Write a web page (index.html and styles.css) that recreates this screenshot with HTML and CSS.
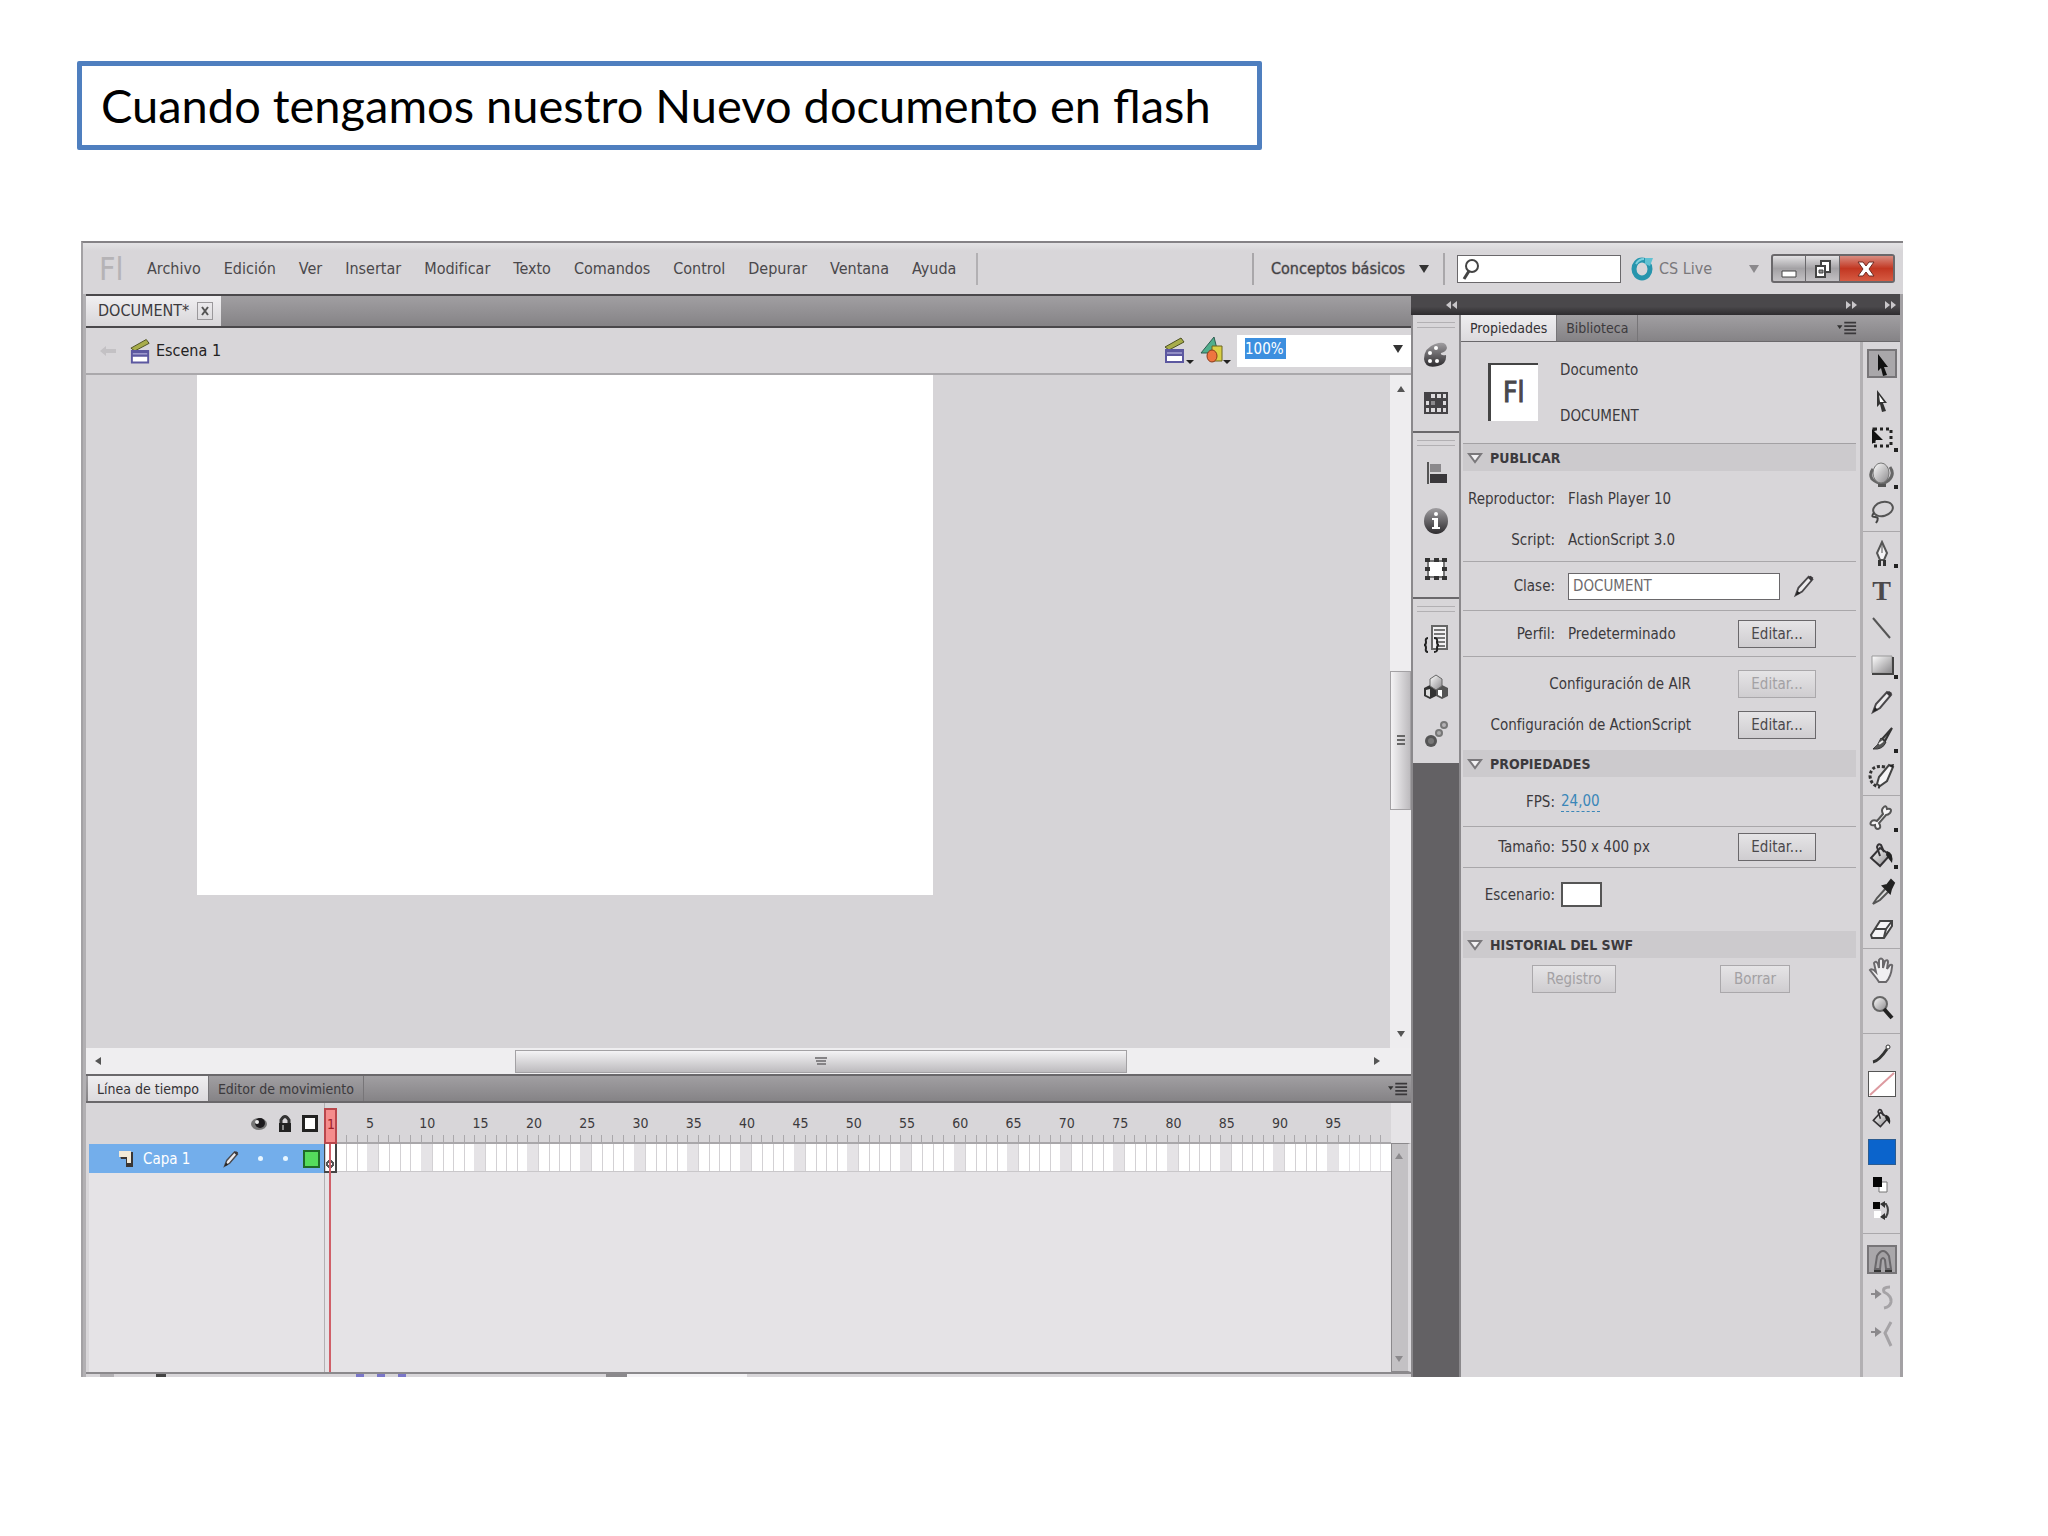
FILE: index.html
```html
<!DOCTYPE html>
<html lang="es">
<head>
<meta charset="utf-8">
<title>Nuevo documento en flash</title>
<link rel="stylesheet" href="styles.css">
</head>
<body>
<svg class="defs" aria-hidden="true">
  <defs>
    <linearGradient id="ball" x1="0" y1="0" x2="1" y2="1"><stop offset="0" stop-color="#fff"/><stop offset="1" stop-color="#8a888b"/></linearGradient>
    <linearGradient id="dark" x1="0" y1="0" x2="0" y2="1"><stop offset="0" stop-color="#a09ea1"/><stop offset="1" stop-color="#2e2c2f"/></linearGradient>
    <symbol id="clap" viewBox="0 0 24 28"><path d="M2 11 18 2l3 4L6 14z" fill="#a8ad4a" stroke="#4c5020"/><path d="M3 14h17v12H3z" fill="#fff" stroke="#5c58a0" stroke-width="2"/><path d="M3 14h17v6H3z" fill="#5c58a0"/><path d="M4 17h15" stroke="#c9c6ea"/></symbol>
    <symbol id="pencil" viewBox="0 0 28 28"><path d="M5 24l3-8L19 4l4 3-11 13z" fill="#ecebed" stroke="#4a484b" stroke-width="2"/><path d="M18 5l4 4 2-4-3-2z" fill="#3c3a3d"/><path d="M5 24l2-5 3 3z" fill="#222"/></symbol>
    <symbol id="bucket" viewBox="0 0 28 28"><path d="M3 17 12 7l10 7-10 11z" fill="url(#ball)" stroke="#343235" stroke-width="2"/><path d="M12 15 9 6q1-4 4-2l3 7" fill="none" stroke="#343235" stroke-width="2"/><path d="M19 10q7 2 5 12-4-5-6-8z" fill="#222"/></symbol>
    <symbol id="menu" viewBox="0 0 22 14"><path d="M0 4h6L3 8z" fill="#333"/><path d="M8 1h13M8 5h13M8 9h13M8 13h13" stroke="#3a383b" stroke-width="2"/></symbol>
    <symbol id="tri" viewBox="0 0 16 12"><path d="M2 2h12L8 10z" fill="#f2f1f3" stroke="#7a787b" stroke-width="2"/></symbol>
  </defs>
</svg>

<h1 class="title">Cuando tengamos nuestro Nuevo documento en flash</h1>

<main class="app">
  <header class="menubar">
    <span class="logo">Fl</span>
    <nav class="menus">
      <a href="#">Archivo</a><a href="#">Edición</a><a href="#">Ver</a><a href="#">Insertar</a><a href="#">Modificar</a><a href="#">Texto</a><a href="#">Comandos</a><a href="#">Control</a><a href="#">Depurar</a><a href="#">Ventana</a><a href="#">Ayuda</a>
    </nav>
    <button class="workspace">Conceptos básicos <i class="down"></i></button>
    <label class="search"><svg width="20" height="24" viewBox="0 0 20 24"><circle cx="11" cy="9" r="6" fill="none" stroke="#444" stroke-width="2"/><path d="M8 14 3 22" stroke="#444" stroke-width="3"/></svg><input type="search" aria-label="Buscar"></label>
    <button class="live"><svg width="24" height="26" viewBox="0 0 24 26"><ellipse cx="11" cy="13" rx="8" ry="9" fill="none" stroke="#2795ad" stroke-width="5"/><path d="M14 2l8 0-3 8-5-2z" fill="#62c1d2"/><path d="M5 8q3-5 8-5" stroke="#7dd0de" stroke-width="2" fill="none"/></svg>CS Live <i class="down pale"></i></button>
    <div class="winbtns">
      <button aria-label="Minimizar"><svg width="20" height="24" viewBox="0 0 20 24"><path d="M3 14h14v6H3z" fill="#fff" stroke="#444"/></svg></button>
      <button aria-label="Restaurar"><svg width="20" height="24" viewBox="0 0 20 24"><path d="M8 4h9v11H8z" fill="#fff" stroke="#444" stroke-width="2"/><path d="M3 9h9v11H3z" fill="#fff" stroke="#444" stroke-width="2"/><path d="M6 13h4v3H6z" fill="#888" stroke="#444"/></svg></button>
      <button class="close" aria-label="Cerrar"><svg width="20" height="22" viewBox="0 0 20 22"><path d="M2 4h5l3 4 3-4h5l-5 7 5 7h-5l-3-4-3 4H2l5-7z" fill="#fff" stroke="#6d2a22"/></svg></button>
    </div>
  </header>

  <div class="body">
    <section class="left">
      <div class="doctabs"><button class="doctab">DOCUMENT* <span class="x"><svg width="8" height="10" viewBox="0 0 8 10"><path d="M1 1l6 8M7 1 1 9" stroke="#555" stroke-width="2"/></svg></span></button></div>
      <div class="editbar">
        <svg class="back" width="18" height="12" viewBox="0 0 18 12"><path d="M1 6l6-5v3h10v4H7v3z" fill="#c3c1c4"/></svg>
        <svg width="23" height="28"><use href="#clap"/></svg>
        <span class="scene">Escena 1</span>
        <button class="ib" aria-label="Editar escena"><svg width="34" height="30" viewBox="0 0 34 30"><use href="#clap" width="24" height="28"/><path d="M23 24h8l-4 4z" fill="#222"/></svg></button>
        <button class="ib" aria-label="Editar símbolos"><svg width="34" height="30" viewBox="0 0 34 30"><path d="M1 17 14 1l4 16z" fill="#4fae8c" stroke="#2c5c50"/><path d="M12 10h10v15H12z" fill="#d9cf45" stroke="#6a6520"/><ellipse cx="12" cy="20" rx="5" ry="6" fill="#ee7440" stroke="#8c3a1a"/><path d="M23 24h8l-4 4z" fill="#222"/></svg></button>
        <div class="zoom"><input type="text" value="100%" aria-label="Zoom"><button aria-label="Niveles de zoom"><i class="down"></i></button></div>
      </div>
      <div class="stage">
        <div class="paste"><div class="canvas"></div></div>
        <div class="vscroll"><i class="up small"></i><span class="thumb"><svg width="8" height="13" viewBox="0 0 8 13"><path d="M0 2h8M0 6h8M0 10h8" stroke="#666" stroke-width="2"/></svg></span><i class="down small"></i></div>
      </div>
      <div class="hscroll"><i class="lt"></i><span class="thumb"><svg width="12" height="9" viewBox="0 0 12 9"><path d="M0 1h12M1 4h10M2 7h9" stroke="#858386" stroke-width="2"/></svg></span><i class="rt"></i></div>

      <div class="tabs timeline-tabs"><button class="tab on">Línea de tiempo</button><button class="tab">Editor de movimiento</button><svg class="pm" width="20" height="14"><use href="#menu"/></svg></div>
      <div class="timeline">
        <div class="layers">
          <div class="lhead">
            <svg width="18" height="16" viewBox="0 0 18 16"><ellipse cx="9" cy="8" rx="8" ry="6" fill="#777"/><circle cx="10" cy="7" r="5" fill="#1c1a1d"/><circle cx="7" cy="6" r="2" fill="#eee"/></svg>
            <svg width="16" height="18" viewBox="0 0 16 18"><path d="M4 9V5q4-7 8 0v4" fill="none" stroke="#333" stroke-width="3"/><path d="M2 8h12v9H2z" fill="#222"/><path d="M6 10v5" stroke="#888" stroke-width="2"/></svg>
            <i class="outline"></i>
          </div>
          <div class="layer">
            <svg width="16" height="18" viewBox="0 0 16 18"><path d="M0 2h14v15H7V9H2z" fill="#3a3634"/><path d="M0 1h12v12H8V7H0z" fill="#f3ead8"/></svg>
            <span class="lname">Capa 1</span>
            <svg width="20" height="22"><use href="#pencil"/></svg><i class="dot"></i><i class="dot"></i><i class="green"></i>
          </div>
        </div>
        <div class="frames">
          <div class="ruler">
            <span>5</span><span>10</span><span>15</span><span>20</span><span>25</span><span>30</span><span>35</span><span>40</span><span>45</span><span>50</span><span>55</span><span>60</span><span>65</span><span>70</span><span>75</span><span>80</span><span>85</span><span>90</span><span>95</span><span></span>
          </div>
          <div class="cells"><span></span><span></span><span></span><span></span><span></span><span></span><span></span><span></span><span></span><span></span><span></span><span></span><span></span><span></span><span></span><span></span><span></span><span></span><span></span><span></span></div>
          <div class="playhead"><b>1</b><em></em></div>
        </div>
        <div class="tscroll"><i class="up small"></i><i class="down small"></i></div>
      </div>
      <div class="footer"><i class="f1"></i><i class="f2"></i><i class="f3"></i><i class="f4"></i><i class="f5"></i></div>
    </section>

    <section class="right">
      <div class="strip"><svg width="12" height="8" viewBox="0 0 12 8"><path d="M5 0v8L0 4zM11 0v8L6 4z" fill="#c9c7ca"/></svg><svg class="s2" width="12" height="8" viewBox="0 0 12 8"><path d="M0 0v8l5-4zM6 0v8l5-4z" fill="#c9c7ca"/></svg><svg width="12" height="8" viewBox="0 0 12 8"><path d="M0 0v8l5-4zM6 0v8l5-4z" fill="#c9c7ca"/></svg></div>
      <div class="cols">
        <aside class="dock">
          <div class="dgroup">
            <button aria-label="Color"><svg width="28" height="28" viewBox="0 0 28 28"><path d="M13 3Q24-1 25 7q-1 4-6 5-1 3 5 2 1 9-8 11Q3 28 2 18 2 7 13 3z" fill="url(#dark)"/><circle cx="8" cy="12" r="2" fill="#fff"/><circle cx="14" cy="7" r="2" fill="#fff"/><circle cx="8" cy="20" r="2" fill="#fff"/><circle cx="15" cy="20" r="2" fill="#fff"/></svg></button>
            <button aria-label="Muestras"><svg width="28" height="28" viewBox="0 0 28 28"><path d="M2 3h24v22H2z" fill="#454346"/><path d="M9 5h4v4H9zM15 5h4v4h-4zM21 5h3v4h-3zM4 12h3v4H4zM21 12h3v4h-3zM4 19h3v4H4zM9 19h4v4H9zM15 19h4v4h-4zM21 19h3v4h-3z" fill="#dddbde"/><path d="M9 12h4v4H9z" fill="#8b898c"/></svg></button>
          </div>
          <div class="dgroup">
            <button aria-label="Alinear"><svg width="28" height="28" viewBox="0 0 28 28"><path d="M6 3v22" stroke="#555" stroke-width="2"/><path d="M8 5h11v8H8z" fill="#8b898c"/><path d="M8 15h17v9H8z" fill="#3a383b"/></svg></button>
            <button aria-label="Información"><svg width="28" height="28" viewBox="0 0 28 28"><ellipse cx="14" cy="14" rx="12" ry="13" fill="url(#dark)"/><circle cx="14" cy="7" r="2" fill="#fff"/><path d="M10 11h6v9h2v2h-8v-2h2v-7h-2z" fill="#fff"/></svg></button>
            <button aria-label="Transformar"><svg width="28" height="28" viewBox="0 0 28 28"><path d="M6 6h16v16H6z" fill="#fff" stroke="#777" stroke-width="2"/><path d="M3 3h5v4H3zM12 3h5v4h-5zM20 3h5v4h-5zM3 12h5v4H3zM20 12h5v4h-5zM3 21h5v4H3zM12 21h5v4h-5zM20 21h5v4h-5z" fill="#333"/></svg></button>
          </div>
          <div class="dgroup">
            <button aria-label="Fragmentos de código"><svg width="28" height="28" viewBox="0 0 28 28"><path d="M10 1h15v23H10z" fill="#f2f1f3" stroke="#666" stroke-width="2"/><path d="M12 5h11M12 9h11M12 13h11M14 17h9M16 21h7" stroke="#777" stroke-width="2"/><path d="M6 13q-3 0-2 4 0 3-2 3 2 0 2 3-1 4 2 4M12 13q4 0 3 4 0 3 2 3-2 0-2 3 1 4-3 4" fill="none" stroke="#222" stroke-width="2"/></svg></button>
            <button aria-label="Componentes"><svg width="28" height="28" viewBox="0 0 28 28"><path d="M2 15l6-3 6 3v8l-6 3-6-3z" fill="#333"/><path d="M4 17l4-1v8l-4-2z" fill="#ddd"/><path d="M14 15l6-3 6 3v8l-6 3-6-3z" fill="#555"/><path d="M16 17h4v7l-4-2z" fill="#fff"/><path d="M8 6l6-4 6 4v7l-6 4-6-4z" fill="url(#ball)" stroke="#666"/></svg></button>
            <button aria-label="Movimientos predefinidos"><svg width="28" height="28" viewBox="0 0 28 28"><circle cx="9" cy="20" r="6" fill="#555"/><circle cx="9" cy="20" r="3" fill="#777"/><circle cx="17" cy="12" r="4" fill="#777"/><circle cx="17" cy="12" r="2" fill="#aaa"/><circle cx="22" cy="4" r="3" fill="#b5b3b6" stroke="#777" stroke-width="2"/></svg></button>
          </div>
        </aside>
        <div class="rightbody">
          <div class="tabs ptabs"><button class="tab on">Propiedades</button><button class="tab">Biblioteca</button><svg class="pm" width="20" height="14"><use href="#menu"/></svg></div>
          <div class="cols">
            <form class="panel">
              <div class="docinfo"><div class="flbox">Fl</div><div class="docname"><span>Documento</span><span>DOCUMENT</span></div></div>
              <h2><svg width="16" height="12"><use href="#tri"/></svg>PUBLICAR</h2>
              <div class="row r1"><span class="lab">Reproductor:</span><span>Flash Player 10</span></div>
              <div class="row r2 line"><span class="lab">Script:</span><span>ActionScript 3.0</span></div>
              <div class="row r3 line"><label class="lab" for="clase">Clase:</label><input id="clase" type="text" value="DOCUMENT"><svg class="pen" width="26" height="28"><use href="#pencil"/></svg></div>
              <div class="row r4 line"><span class="lab">Perfil:</span><span>Predeterminado</span><button type="button" class="btn">Editar...</button></div>
              <div class="row r5"><span class="wide">Configuración de AIR</span><button type="button" class="btn" disabled>Editar...</button></div>
              <div class="row r6"><span class="wide">Configuración de ActionScript</span><button type="button" class="btn">Editar...</button></div>
              <h2><svg width="16" height="12"><use href="#tri"/></svg>PROPIEDADES</h2>
              <div class="row near r7 line"><span class="lab">FPS:</span><a href="#">24,00</a></div>
              <div class="row near r8 line"><span class="lab">Tamaño:</span><span>550 x 400 px</span><button type="button" class="btn">Editar...</button></div>
              <div class="row near r9"><span class="lab">Escenario:</span><button type="button" class="swatch" aria-label="Color del escenario"></button></div>
              <h2><svg width="16" height="12"><use href="#tri"/></svg>HISTORIAL DEL SWF</h2>
              <div class="hist"><button type="button" class="btn reg" disabled>Registro</button><button type="button" class="btn bor" disabled>Borrar</button></div>
            </form>
            <aside class="tools">
              <div class="tg">
                <button class="sel" aria-label="Selección"><svg width="28" height="28" viewBox="0 0 28 28"><path d="M9 3l10 13h-4l3 8-4 1-2-8-3 3z" fill="#111"/></svg></button>
                <button aria-label="Subselección"><svg width="28" height="28" viewBox="0 0 28 28"><path d="M9 3l10 13h-4l3 8-4 1-2-8-3 3z" fill="#333"/><path d="M11 8l5 7h-4z" fill="#fff"/></svg></button>
                <button class="more" aria-label="Transformación libre"><svg width="28" height="28" viewBox="0 0 28 28"><path d="M6 5h17v17H6z" fill="none" stroke="#222" stroke-width="3" stroke-dasharray="3 3"/><path d="M4 5l11 11H8l-4 4z" fill="#111"/></svg></button>
                <button class="more" aria-label="Rotación 3D"><svg width="28" height="28" viewBox="0 0 28 28"><path d="M22 6q5 7-1 13-8 7-17-1-3-5 1-10" fill="none" stroke="#666" stroke-width="3"/><ellipse cx="13" cy="12" rx="8" ry="10" fill="url(#ball)" stroke="#777"/><path d="M10 23h8v3h-8z" fill="#555"/></svg></button>
                <button aria-label="Lazo"><svg width="28" height="28" viewBox="0 0 28 28"><ellipse cx="15" cy="11" rx="10" ry="7" transform="rotate(-15 15 11)" fill="none" stroke="#555" stroke-width="2"/><path d="M6 15q-4 4 1 4t1 6" fill="none" stroke="#444" stroke-width="2"/></svg></button>
              </div>
              <div class="tg">
                <button class="more" aria-label="Pluma"><svg width="28" height="28" viewBox="0 0 28 28"><path d="M14 2l5 11-3 7h-4l-3-7z" fill="#f5f4f6" stroke="#555" stroke-width="2"/><path d="M14 4v9" stroke="#555"/><path d="M10 20h3v6h-3zM15 20h3v6h-3z" fill="#333"/></svg></button>
                <button aria-label="Texto" class="tt">T</button>
                <button aria-label="Línea"><svg width="28" height="28" viewBox="0 0 28 28"><path d="M5 4l17 20" stroke="#555" stroke-width="2"/></svg></button>
                <button class="more" aria-label="Rectángulo"><svg width="28" height="28" viewBox="0 0 28 28"><path d="M4 5h20v17H4z" fill="url(#ball)" stroke="#999"/><path d="M4 23h21V6" fill="none" stroke="#444" stroke-width="2"/></svg></button>
                <button aria-label="Lápiz"><svg width="28" height="28"><use href="#pencil"/></svg></button>
                <button class="more" aria-label="Pincel"><svg width="28" height="28" viewBox="0 0 28 28"><path d="M24 3 14 14l3 2z" fill="#999" stroke="#333" stroke-width="2"/><path d="M13 13l5 4q-3 8-13 7 5-3 8-11z" fill="#555" stroke="#333"/><path d="M11 19l4-3" stroke="#eee" stroke-width="2"/></svg></button>
                <button aria-label="Deco"><svg width="28" height="28" viewBox="0 0 28 28"><path d="M9 22l2-7L21 3l4 2-6 14-7 5z" fill="#f5f4f6" stroke="#444" stroke-width="2"/><path d="M17 5Q3 2 2 14q1 10 10 11" fill="none" stroke="#333" stroke-width="3" stroke-dasharray="3 2"/><path d="M21 3l4 3 1-4z" fill="#222"/></svg></button>
              </div>
              <div class="tg">
                <button class="more" aria-label="Hueso"><svg width="28" height="28" viewBox="0 0 28 28"><path d="M15 4q3-4 4 1 6-1 3 4-2 2-4 2l-7 8q3 5-1 6-3 0-3-4-6 1-4-3 2-3 6-1l6-7q-2-4 0-6z" fill="#f5f4f6" stroke="#555" stroke-width="2"/></svg></button>
                <button class="more" aria-label="Cubo de pintura"><svg width="28" height="28"><use href="#bucket"/></svg></button>
                <button aria-label="Cuentagotas"><svg width="28" height="28" viewBox="0 0 28 28"><path d="M18 10 9 20l-4 6 7-4 9-9z" fill="#ddd" stroke="#555" stroke-width="2"/><path d="M15 8l4-1 4-5 3 3-3 6-1 4z" fill="#222" stroke="#222" stroke-width="2"/></svg></button>
                <button aria-label="Borrador"><svg width="28" height="28" viewBox="0 0 28 28"><path d="M3 20 12 6h12v5l-8 12H4z" fill="#f5f4f6" stroke="#444" stroke-width="2"/><path d="M7 14h11l6-8M18 14l-2 8" fill="none" stroke="#444" stroke-width="2"/></svg></button>
              </div>
              <div class="tg tg4">
                <button aria-label="Mano"><svg width="28" height="28" viewBox="0 0 28 28"><path d="M9 22 2 13q2-2 6 2L6 6q2-3 4 1l1 4V3q2-3 4 0v8l2-7q3-2 3 1l-1 7 3-4q3-1 2 2-1 10-6 15h-7z" fill="#f0eff1" stroke="#6a686b" stroke-width="2"/></svg></button>
                <button aria-label="Zoom"><svg width="28" height="28" viewBox="0 0 28 28"><circle cx="12" cy="10" r="7" fill="url(#ball)" stroke="#666" stroke-width="2"/><path d="M16 15l8 9" stroke="#222" stroke-width="4"/></svg></button>
              </div>
              <div class="tg tg5">
                <button aria-label="Color de trazo"><svg width="22" height="22" viewBox="0 0 22 22"><path d="M2 19q6-1 14-13" fill="none" stroke="#333" stroke-width="3"/><circle cx="17" cy="4" r="2" fill="#fff" stroke="#333"/></svg></button>
                <button class="chip" aria-label="Sin trazo"><svg width="26" height="24" viewBox="0 0 26 24"><path d="M1 23 25 1" stroke="#dd9aa0" stroke-width="2"/></svg></button>
                <button class="b2" aria-label="Color de relleno"><svg width="22" height="22"><use href="#bucket"/></svg></button>
                <button class="chip blue" aria-label="Relleno azul"></button>
                <button class="sm first" aria-label="Blanco y negro"><svg width="18" height="18" viewBox="0 0 18 18"><path d="M6 6h8v10H6z" fill="#fff" stroke="#777"/><path d="M0 1h9v10H0z" fill="#050505"/></svg></button>
                <button class="sm" aria-label="Intercambiar colores"><svg width="20" height="20" viewBox="0 0 20 20"><path d="M1 1h7v7H1z" fill="#050505"/><path d="M2 10h7v7H2z" fill="#fff"/><path d="M10 3h4q4 6 0 13h-3" fill="none" stroke="#444" stroke-width="2"/><path d="M13 0v7L8 3zM13 12v7l-5-3z" fill="#333"/></svg></button>
              </div>
              <div class="tg tg6">
                <button class="sel" aria-label="Ajustar a objetos"><svg width="28" height="28" viewBox="0 0 28 28"><path d="M6 22 8 9q6-10 12 0l2 13h-5l-1-9q-2-4-4 0l-1 9z" fill="#a3a1a4" stroke="#6a686b" stroke-width="2"/><path d="M5 24h7M16 24h7" stroke="#333" stroke-width="2"/></svg></button>
                <button aria-label="Suavizar"><svg width="28" height="28" viewBox="0 0 28 28"><path d="M3 11h5M8 8l4 3-4 3z" fill="#8b898c" stroke="#8b898c" stroke-width="2"/><path d="M22 4q-8 0-6 5 8 4 7 10-1 5-7 6" fill="none" stroke="#a5a3a6" stroke-width="3"/></svg></button>
                <button aria-label="Enderezar"><svg width="28" height="28" viewBox="0 0 28 28"><path d="M3 12h5M8 9l4 3-4 3z" fill="#8b898c" stroke="#8b898c" stroke-width="2"/><path d="M23 2l-6 11 6 13" fill="none" stroke="#a5a3a6" stroke-width="3"/></svg></button>
              </div>
            </aside>
          </div>
        </div>
      </div>
    </section>
  </div>
</main>
</body>
</html>
```
FILE: styles.css
```css
* { box-sizing: border-box; }
body { margin: 0; padding: 61px 145px 0 77px; background: #fff; color: #3c3a3d; font: 15px/20px "DejaVu Sans Condensed", sans-serif; }
button, input { font: inherit; color: inherit; margin: 0; padding: 0; border: 0; background: none; border-radius: 0; }
button { cursor: pointer; }
a { color: inherit; text-decoration: none; }
svg { display: block; flex: none; }
i { display: block; flex: none; }
.defs { position: absolute; width: 0; height: 0; }

.title { width: fit-content; margin: 0 0 91px; padding: 13px 46px 14px 19px; border: 5px solid #4f7fbf; border-radius: 2px; color: #000; font: 400 47px/52px Lato, sans-serif; }

.app { margin-left: 4px; border-top: 2px solid #858386; border-left: 2px solid #a3a1a4; background: #d8d6d9; }
.down, .up { width: 0; height: 0; border: 5px solid transparent; }
.down { border-top: 8px solid #333; border-bottom: 0; }
.up { border-bottom: 8px solid #333; border-top: 0; }
.down.pale { border-top-color: #8b898c; }
.small { border-left-width: 4px; border-right-width: 4px; }
.down.small { border-top-width: 6px; border-top-color: #555; }
.up.small { border-bottom-width: 6px; border-bottom-color: #555; }

.menubar { display: flex; align-items: center; height: 51px; padding: 0 8px 0 16px; background: linear-gradient(#e4e3e5, #d8d6d9 8px); font-size: 16px; }
.logo { width: 24px; margin-right: 24px; color: #b5b3b6; font-size: 32px; line-height: 32px; }
.menus { display: flex; gap: 23px; height: 32px; align-items: center; padding-right: 20px; border-right: 2px solid #b2b0b3; margin-right: auto; color: #4a484b; }
.workspace { display: flex; align-items: center; justify-content: space-between; width: 193px; height: 32px; padding: 0 14px 0 17px; margin-right: 12px; border: solid #a9a7aa; border-width: 0 2px; -webkit-text-stroke: 1px #55535666; }
.search { display: flex; align-items: center; width: 164px; height: 28px; margin-right: 10px; padding-left: 3px; border: 1px solid #6a686b; background: #fff; }
.search input { width: 130px; height: 24px; outline: 0; }
.live { display: flex; align-items: center; gap: 4px; width: 128px; margin-right: 12px; color: #7a787b; }
.live .down { margin-left: auto; }
.winbtns { display: flex; width: 124px; height: 29px; border: 2px solid #6a686b; border-radius: 3px; background: linear-gradient(#e2e1e3, #a3a1a4 50%, #c3c1c4); }
.winbtns button { display: flex; flex: 34; align-items: center; justify-content: center; border-right: 1px solid #6a686b; }
.winbtns .close { flex: 56; border: 0; background: linear-gradient(#d98c80, #c23722 50%, #d65a42); }

.body { display: flex; }
.left { flex: 1; min-width: 0; border-left: 3px solid #b2b0b3; }
.doctabs { height: 34px; border: solid #4a484b; border-width: 2px 0; background: linear-gradient(#a19fa2, #858386); }
.doctab { display: flex; align-items: center; gap: 8px; height: 30px; padding: 0 8px 0 12px; background: linear-gradient(#f0eff1, #d8d6d9); font-size: 16px; }
.x { display: grid; place-items: center; width: 16px; height: 18px; border: 1px solid #9a989b; }
.editbar { display: flex; align-items: center; height: 47px; padding-left: 13px; border-bottom: 2px solid #aaa8ab; }
.back { margin-right: 12px; }
.scene { margin: 0 auto 0 4px; color: #222; font-size: 16px; }
.ib { margin-right: 3px; }
.zoom { display: flex; align-items: center; justify-content: space-between; width: 174px; height: 32px; padding: 0 8px 4px; background: #fff; }
.zoom input { width: 41px; height: 21px; background: #3c8fdf; color: #fff; }

.stage { display: flex; height: 673px; }
.paste { flex: 1; padding-left: 111px; background: #d6d4d7; overflow: hidden; }
.canvas { width: 736px; height: 520px; background: #fff; }
.vscroll { display: flex; flex-direction: column; align-items: center; justify-content: space-between; width: 21px; padding: 11px 0; background: #eeedef; }
.thumb { display: grid; place-items: center; border: 1px solid #a3a1a4; }
.vscroll .thumb { width: 21px; height: 139px; margin-top: 58px; background: linear-gradient(90deg, #f4f3f5, #bdbbbe); }
.hscroll { display: flex; align-items: center; justify-content: space-between; height: 26px; padding: 0 31px 0 9px; background: #efeef0; }
.hscroll .thumb { width: 612px; height: 23px; margin-left: 166px; background: linear-gradient(#f4f3f5, #bdbbbe); }
.lt, .rt { border: 4px solid transparent; }
.lt { border-right: 6px solid #555; border-left: 0; }
.rt { border-left: 6px solid #555; border-right: 0; }

.tabs { display: flex; height: 29px; border: solid #6a686b; border-width: 2px 0; background: linear-gradient(#a19fa2, #858386); }
.timeline-tabs { padding-left: 2px; }
.tab { padding: 0 9px; border-right: 1px solid #777578; font-size: 14px; color: #3c3a3d; }
.tab.on { background: linear-gradient(#efeef0, #dcdadd); color: #333134; }
.pm { margin: 6px 3px 0 auto; }
.timeline { display: flex; height: 269px; background: #e5e3e6; border-left: 3px solid #d8d6d9; }
.layers { width: 236px; border-right: 1px solid #b2b0b3; }
.lhead, .layer { display: flex; align-items: center; }
.lhead { gap: 9px; height: 41px; padding-left: 161px; background: #d8d6d9; }
.outline { width: 16px; height: 17px; border: 3px solid #222; background: #fff; }
.layer { height: 29px; padding-left: 30px; background: #73aeeb; color: #fff; }
.lname { width: 78px; margin-left: 8px; }
.dot { width: 5px; height: 5px; margin-left: 17px; border-radius: 50%; background: #e8f6ff; }
.dot + .dot { margin-left: 20px; }
.green { width: 17px; height: 18px; margin-left: 15px; border: 2px solid #1f6b27; background: #55dc5c; }
.frames { position: relative; flex: 1; min-width: 0; }
.ruler, .cells { display: flex; }
.ruler { height: 41px; border-bottom: 2px solid #a9a7aa; background: #d8d6d9; }
.ruler span { flex: 1 1 0; width: 0; padding: 10px 0 0 41px; white-space: nowrap; font-size: 14px; background: repeating-linear-gradient(90deg, #aaa8ab 0 1px, transparent 1px 20%) bottom / 100% 7px no-repeat; }
.cells { height: 28px; border-bottom: 1px solid #c9c7ca; background: #fff; }
.cells span { flex: 1; background: linear-gradient(90deg, transparent 80%, #e5e3e6 80%), repeating-linear-gradient(90deg, #d3d1d4 0 1px, #fff 1px 20%); }
.cells span:last-child { background: repeating-linear-gradient(90deg, #e3e1e4 0 1px, #fff 1px 20%); }
.playhead { position: absolute; left: -1px; top: 5px; bottom: 0; width: 13px; }
.playhead::after { content: ""; position: absolute; left: 5px; top: 36px; bottom: 0; width: 2px; background: #d05f68; }
.playhead b { display: block; height: 36px; padding: 5px 0 0 1px; border: 2px solid #b9474c; background: #f58c8c; color: #a02028; font-size: 14px; font-weight: 400; line-height: 18px; }
.playhead em { display: block; height: 29px; border: solid #444; border-width: 0 2px 2px 1px; background: radial-gradient(circle at 50% 20px, #fff 2px, #555 2px 4px, transparent 4px); }
.tscroll { display: flex; flex-direction: column; align-items: center; justify-content: space-between; width: 20px; margin: 40px 0 0; padding: 9px 2px 9px 0; border: 1px solid #8b898c; border-right: 3px solid #dcdadd; background: #c3c1c4; }
.tscroll .up { border-bottom-color: #8b898c; }
.tscroll .down { border-top-color: #8b898c; }
.footer { display: flex; height: 5px; border-top: 2px solid #8b898c; background: #d8d6d9; }
.footer i { height: 3px; }
.f1 { width: 14px; margin-left: 14px; background: #b2b0b3; }
.f2 { width: 10px; margin-left: 42px; background: #444; }
.f3 { width: 50px; margin-left: 190px; background: repeating-linear-gradient(90deg, #7a76c8 0 8px, transparent 8px 21px); }
.f4 { width: 21px; margin-left: 200px; background: #8b898c; }
.f5 { width: 120px; margin-left: 0; background: #f4f3f5; }

.right { display: flex; flex-direction: column; width: 492px; border-right: 3px solid #a3a1a4; }
.strip { display: flex; align-items: center; height: 21px; padding: 0 3px 0 35px; gap: 27px; background: linear-gradient(#4a484b 60%, #2e2c2f); }
.s2 { margin-left: auto; }
.cols { display: flex; flex: 1; }
.dock { width: 50px; border: solid #8b898c; border-width: 0 2px; background: #636164; }
.dgroup { padding: 7px 0 4px; border-bottom: 2px solid #6a686b; background: #d8d6d9; }
.dgroup:last-child { border: 0; }
.dgroup::before { content: ""; display: block; height: 4px; margin: 0 4px 3px; border: solid #b2b0b3; border-width: 1px 0; }
.dgroup button { display: grid; place-items: center; width: 100%; height: 48px; }
.rightbody { display: flex; flex-direction: column; flex: 1; }
.ptabs { height: 27px; border-width: 0 0 1px; }
.ptabs .pm { margin-right: 43px; }
.panel { flex: 1; padding: 0 4px 0 2px; }
.panel h2 { display: flex; align-items: center; gap: 7px; height: 27px; margin: 0; padding-left: 4px; background: #cccacd; font-size: 14px; font-weight: 700; }
.docinfo { display: flex; gap: 22px; height: 102px; padding: 21px 0 0 25px; border-bottom: 1px solid #a3a1a4; }
.flbox { width: 50px; height: 58px; padding: 14px 0 0 12px; border: solid #444; border-width: 2px 0 0 3px; background: #fff; font-size: 28px; line-height: 28px; color: #4a484b; -webkit-text-stroke: 1px #4a484b; }
.docname { display: flex; flex-direction: column; gap: 26px; margin-top: -3px; }
.row { display: flex; align-items: center; gap: 13px; }
.near { gap: 6px; }
.line { border-bottom: 1px solid #a9a7aa; }
.lab { width: 92px; text-align: right; white-space: nowrap; }
.row .btn { margin-left: auto; margin-right: 40px; }
.btn { width: 78px; height: 28px; border: 1px solid #6a686b; background: linear-gradient(#e5e4e6, #cfcdd0); color: #4a484b; }
.btn:disabled { border-color: #aaa8ab; color: #a3a1a4; }
.r1 { height: 55px; }
.r2 { height: 36px; padding-bottom: 8px; }
.r3 { height: 49px; }
.r3 input { width: 212px; height: 27px; padding: 0 4px; border: 1px solid #6a686b; background: #fff; color: #6d6b6e; }
.r3 .pen { margin-left: -2px; }
.r4 { height: 46px; }
.r5 { height: 50px; padding-top: 4px; }
.r6 { height: 43px; padding-bottom: 7px; }
.wide { width: 228px; text-align: right; }
.r7 { height: 50px; }
.r7 a { color: #3a86b8; border-bottom: 1px dashed #3a86b8; }
.r8 { height: 41px; }
.r9 { height: 63px; padding-bottom: 10px; }
.swatch { width: 41px; height: 25px; border: 2px solid #555; background: #fff; }
.hist { display: flex; gap: 104px; padding: 7px 0 0 69px; }
.reg { width: 84px; }
.bor { width: 70px; }

.tools { width: 40px; padding: 3px 0 17px; border-left: 3px solid #b2b0b3; }
.tg { padding-bottom: 1px; margin-bottom: 3px; border-bottom: 1px solid #aaa8ab; }
.tg button { position: relative; display: grid; place-items: center; width: 32px; height: 37px; margin: 0 auto; }
.tg .sel { height: 29px; width: 30px; margin-top: 4px; margin-bottom: 4px; border: 2px solid #777578; background: #a9a7aa; }
.more::after { content: ""; position: absolute; right: 0; bottom: 4px; width: 4px; height: 4px; background: #222; }
.tools .tt { color: #4a484b; font: 700 28px/30px "Liberation Serif", serif; }
.tg4 { padding-bottom: 7px; }
.tg .chip { width: 28px; height: 26px; border: 1px solid #555; background: #fff; }
.tg5 button { height: 34px; }
.tg5 .b2 { height: 42px; }
.tg .blue { background: #0b64cc; border-color: #2c5c90; }
.tg5 .sm { height: 26px; }
.tg5 .first { margin-top: 7px; }
.tg5 { padding-bottom: 9px; }
.tg6 { padding-top: 4px; border: 0; }
```
